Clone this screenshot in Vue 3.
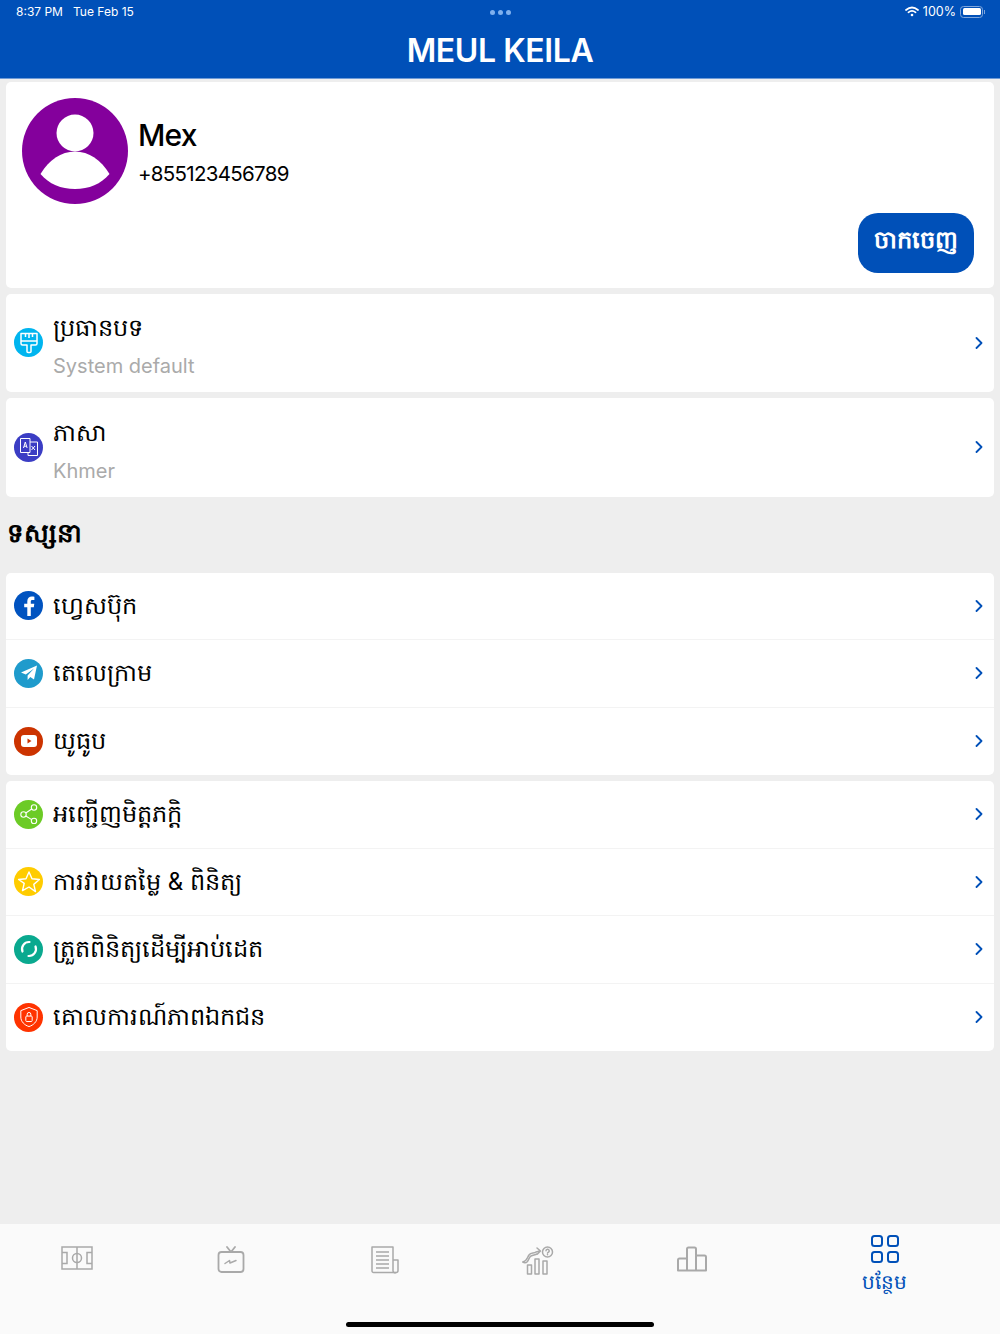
<template>
  <div class="page">
    <header class="top">
      <div class="status">
        <span class="clock">8:37 PM</span>
        <span class="date">Tue Feb 15</span>
        <span class="dots"><i></i><i></i><i></i></span>
        <span class="status-right">
          <svg width="14" height="11" viewBox="0 0 14 11" fill="none" stroke="#fff" stroke-linecap="round">
            <path d="M1 4Q7-1 13 4" stroke-width="1.7" />
            <path d="M3.4 6.3Q7 3.4 10.6 6.3" stroke-width="1.7" />
            <circle cx="7" cy="9" r="1.3" fill="#fff" stroke="none" />
          </svg>
          <span class="pct">100%</span>
          <span class="battery"><b></b></span>
        </span>
      </div>
      <h1>MEUL KEILA</h1>
    </header>

    <main class="content">
      <section class="card profile">
        <div class="who">
          <svg class="avatar" width="106" height="106" viewBox="0 0 106 106">
            <circle cx="53" cy="53" r="53" fill="#84009c" />
            <circle cx="53" cy="35" r="18.5" fill="#fff" />
            <path d="M18.5 76C27 62 39 53.5 53 53.5S79 62 87.5 76C79 86 67 91 53 91S27 86 18.5 76Z" fill="#fff" />
          </svg>
          <div class="names">
            <div class="name">Mex</div>
            <div class="phone">+855123456789</div>
          </div>
        </div>
        <button class="logout">ចាកចេញ</button>
      </section>

      <section v-for="s in settings" :key="s.title" class="card setting">
        <span class="badge" :style="{ background: s.color }" v-html="s.icon"></span>
        <div class="setting-text">
          <div class="label">{{ s.title }}</div>
          <div class="sub">{{ s.sub }}</div>
        </div>
        <svg class="chev" width="8" height="12" viewBox="0 0 8 12" fill="none"><path d="M1.5 1l5 5-5 5" stroke="#0050b8" stroke-width="1.8" stroke-linecap="round" stroke-linejoin="round" /></svg>
      </section>

      <h2>ទស្សនា</h2>

      <section v-for="(group, i) in groups" :key="i" class="card group">
        <div v-for="row in group" :key="row.title" class="row">
          <span class="badge" :style="{ background: row.color }" v-html="row.icon"></span>
          <span class="label">{{ row.title }}</span>
          <svg class="chev" width="8" height="12" viewBox="0 0 8 12" fill="none"><path d="M1.5 1l5 5-5 5" stroke="#0050b8" stroke-width="1.8" stroke-linecap="round" stroke-linejoin="round" /></svg>
        </div>
      </section>
    </main>

    <nav class="tabs">
      <div class="tab">
        <svg width="32" height="24" viewBox="0 0 32 24" fill="none" stroke="#a9a9a9" stroke-width="1.5">
          <rect x="1" y="1" width="30" height="22" />
          <path d="M16 1v22M1 6.5h5v11H1M31 6.5h-5v11h5" />
          <circle cx="16" cy="12" r="4.5" />
        </svg>
      </div>
      <div class="tab">
        <svg width="28" height="28" viewBox="0 0 28 28" fill="none" stroke="#a9a9a9" stroke-width="1.8" stroke-linejoin="round" stroke-linecap="round">
          <rect x="1.5" y="6" width="25" height="20" rx="3" />
          <path d="M10 1l4 5 4-5" />
          <path d="M8 17.5l4.5-3 .5 2.5 6-2.500" stroke-width="1.5" />
        </svg>
      </div>
      <div class="tab">
        <svg width="29" height="28" viewBox="0 0 29 28" fill="none" stroke="#a9a9a9" stroke-width="1.5" stroke-linejoin="round">
          <path d="M23 19V1H2v24a1.5 1.5 0 0 0 1.5 1.5H26a2 2 0 0 0 2-2V14h-5" />
          <path d="M6 6h13M6 10h13M6 14h13M6 18h13M6 22h13" />
          <path d="M23 19v5.5a2 2 0 0 0 3 2" />
        </svg>
      </div>
      <div class="tab">
        <svg width="32" height="30" viewBox="0 0 32 30" fill="none" stroke="#a9a9a9" stroke-width="1.5" stroke-linejoin="round" stroke-linecap="round">
          <path d="M1 16c4-1 4-4 6-7s5-1 7-3l4-1M15 2l3.5 3-3 3" />
          <path d="M1 16c1 1 3 1 4 0 2-2 2-5 4-6s4-1 6-2" />
          <circle cx="25.5" cy="6" r="5" />
          <path d="M24 4.8a1.6 1.6 0 1 1 2.3 1.5l-.8.7M25.5 8.5v.2" />
          <rect x="5.500" y="19" width="4" height="9" />
          <rect x="13" y="13" width="4" height="15" />
          <rect x="21" y="15" width="4" height="13" />
        </svg>
      </div>
      <div class="tab">
        <svg width="30" height="26" viewBox="0 0 30 26" fill="none" stroke="#a9a9a9" stroke-width="2" stroke-linejoin="round">
          <path d="M1 24.5V14a1.5 1.5 0 0 1 1.5-1.5H10V3a1.5 1.5 0 0 1 1.5-1.5h6A1.5 1.5 0 0 1 19 3v6.5h8.5A1.5 1.5 0 0 1 29 11v13.5Z" />
          <path d="M10 12.5v12M19 9.5v15" />
        </svg>
      </div>
      <div class="tab active">
        <svg width="30" height="30" viewBox="0 0 30 30" fill="none" stroke="#0050b8" stroke-width="2">
          <rect x="2" y="2" width="10" height="10" rx="2.5" />
          <rect x="18" y="2" width="10" height="10" rx="2.5" />
          <rect x="2" y="18" width="10" height="10" rx="2.5" />
          <rect x="18" y="18" width="10" height="10" rx="2.5" />
        </svg>
        <span class="tab-label">បន្ថែម</span>
      </div>
      <span class="home-bar"></span>
    </nav>
  </div>
</template>

<script setup>
const brush = `<svg width="20" height="22" viewBox="0 0 20 22" fill="none" stroke="#fff" stroke-width="1.5" stroke-linejoin="round"><path d="M2 1.5h16v10a1.5 1.5 0 0 1-1.5 1.5H12v6.500a1 1 0 0 1-1 1H9a1 1 0 0 1-1-1V13H3.5A1.5 1.5 0 0 1 2 11.5Z"/><path d="M2 9h16M6.5 1.5V5M10 1.5V6M13.500 1.5V5"/></svg>`
const translate = `<svg width="20" height="20" viewBox="0 0 20 20" fill="none" stroke="#fff" stroke-width="1"><path d="M1.5 1.5H11v14H1.5z"/><path d="M11 5h7.5v13.5H9v-3"/><path d="M4.5 11l1.800-6 1.800 6M5 9.200h2.600" /><path d="M12.500 9l3.500 4M16 9l-3.500 4"/></svg>`
const fb = `<svg width="12" height="20" viewBox="0 0 12 20"><path d="M7.800 20v-8.800h3l.5-3.500H7.800V5.600c0-1 .3-1.700 1.700-1.700h1.900V.8C11 .7 10 .6 8.900.6 6.200.6 4.300 2.300 4.300 5.300v2.400H1.200v3.500h3.100V20Z" fill="#fff"/></svg>`
const plane = `<svg width="18" height="18" viewBox="0 0 18 18"><path d="M17 1.500 1 8.500l4.800 1.900L14 4.500 7.600 11.500v4.500l2.700-3 3.700 2.500Z" fill="#fff"/></svg>`
const yt = `<svg width="16" height="12" viewBox="0 0 16 12"><rect width="16" height="12" rx="3" fill="#fff"/><path d="M6.500 3.500 10.500 6l-4 2.500Z" fill="#cc3300"/></svg>`
const share = `<svg width="20" height="20" viewBox="0 0 20 20" fill="none" stroke="#fff" stroke-width="1.100"><circle cx="15" cy="3.500" r="2.700"/><circle cx="4.500" cy="10.500" r="2.700"/><circle cx="15" cy="17" r="2.700"/><path d="M6.800 9l5.900-4M6.800 12l5.900 3.600"/></svg>`
const star = `<svg width="24" height="24" viewBox="0 0 24 24" fill="none" stroke="#fff" stroke-width="1.400" stroke-linejoin="round"><path d="M12 2l3 6.800 7.400.7-5.600 4.900 1.700 7.200L12 17l-6.500 3.600 1.700-7.200L1.600 9.500 9 8.800Z"/></svg>`
const sync = `<svg width="20" height="20" viewBox="0 0 20 20" fill="none" stroke="#fff" stroke-width="2.200" stroke-linecap="round"><path d="M3.500 12.500A7 7 0 0 1 10.500 3"/><path d="M16.500 7.500A7 7 0 0 1 9.500 17"/></svg>`
const shield = `<svg width="20" height="22" viewBox="0 0 22 24" fill="none" stroke="#fff" stroke-width="1.100"><path d="M11 1.500 20 5v7c0 5-4 9-9 10.500C6 21 2 17 2 12V5Z"/><rect x="7.500" y="11" width="7" height="6" rx="1"/><path d="M9 11V9a2 2 0 0 1 4 0v2"/></svg>`

const settings = [
  { title: 'ប្រធានបទ', sub: 'System default', color: '#00b5ef', icon: brush },
  { title: 'ភាសា', sub: 'Khmer', color: '#3b3dc4', icon: translate },
]

const groups = [
  [
    { title: 'ហ្វេសប៊ុក', color: '#0053c0', icon: fb },
    { title: 'តេលេក្រាម', color: '#1f9bcc', icon: plane },
    { title: 'យូធូប', color: '#cc3300', icon: yt },
  ],
  [
    { title: 'អញ្ជើញមិត្តភក្តិ', color: '#6ccb26', icon: share },
    { title: 'ការវាយតម្លៃ & ពិនិត្យ', color: '#ffcc00', icon: star },
    { title: 'ត្រួតពិនិត្យដើម្បីអាប់ដេត', color: '#0aa98f', icon: sync },
    { title: 'គោលការណ៍ភាពឯកជន', color: '#ff3300', icon: shield },
  ],
]
</script>

<style>
body {
  background: #eeeeee;
}
</style>

<style scoped>
.page {
  width: 1000px;
  height: 1334px;
  display: flex;
  flex-direction: column;
  background: #eeeeee;
  font-family: Inter, "Noto Sans", sans-serif;
  color: #000;
  overflow: hidden;
}

.top {
  height: 78px;
  flex: none;
  background: #0050b8;
  border-bottom: 1px solid #6f9bd6;
  box-sizing: content-box;
  color: #fff;
}

.status {
  height: 23px;
  display: flex;
  align-items: center;
  position: relative;
  padding: 0 17px 0 16px;
  font-size: 12px;
}

.date {
  margin-left: 10px;
}

.dots {
  position: absolute;
  left: 490px;
  top: 10px;
  display: flex;
  gap: 3px;
}

.dots i {
  width: 5px;
  height: 5px;
  border-radius: 50%;
  background: #7fb0ee;
}

.status-right {
  margin-left: auto;
  display: flex;
  align-items: center;
  gap: 4px;
}

.pct {
  font-size: 12.5px;
}

.battery {
  position: relative;
  flex: none;
  width: 23px;
  height: 12px;
  padding: 1.5px;
  border: 1px solid #7fa6dc;
  border-radius: 3.5px;
  box-sizing: border-box;
  display: block;
}

.battery::after {
  content: "";
  position: absolute;
  right: -3px;
  top: 3px;
  width: 1.5px;
  height: 4px;
  background: #7fa6dc;
}

.battery b {
  display: block;
  width: 100%;
  height: 100%;
  background: #fff;
  border-radius: 1.5px;
}

h1 {
  margin: 0;
  height: 55px;
  line-height: 56px;
  text-align: center;
  font-size: 32px;
  font-weight: 600;
  letter-spacing: -0.4px;
}

.content {
  flex: 1;
  padding: 3px 6px 0;
  display: flex;
  flex-direction: column;
  gap: 6px;
}

.card {
  background: #fff;
  border-radius: 5px;
}

.profile {
  height: 205.5px;
  padding: 16px 20px 15px 16px;
  box-sizing: border-box;
  display: flex;
  flex-direction: column;
  justify-content: space-between;
}

.who {
  display: flex;
  align-items: center;
  gap: 10px;
}

.avatar {
  flex: none;
}

.names {
  padding-top: 4px;
}

.name {
  font-size: 30px;
  font-weight: 500;
  line-height: 42px;
  letter-spacing: -0.8px;
}

.phone {
  font-size: 20.5px;
  line-height: 36px;
  letter-spacing: -0.7px;
}

.logout {
  align-self: flex-end;
  width: 116px;
  height: 60px;
  border: 0;
  border-radius: 20px;
  background: #0050b8;
  color: #fff;
  font: inherit;
  font-size: 24px;
  font-weight: 700;
}

.setting {
  height: 98.5px;
  padding: 0 11px 0 8px;
  display: flex;
  align-items: center;
  box-sizing: border-box;
}

.setting-text {
  flex: 1;
  padding-top: 9px;
}

.badge {
  flex: none;
  width: 29px;
  height: 29px;
  margin-right: 10px;
  border-radius: 50%;
  display: flex;
  align-items: center;
  justify-content: center;
}

.label {
  font-size: 24px;
  line-height: 38px;
}

.sub {
  font-size: 20px;
  line-height: 38px;
  color: #aaaaaa;
}

h2 {
  margin: 6px 1px 11px;
  height: 47px;
  line-height: 47px;
  font-size: 26px;
  font-weight: 700;
}

.group {
  display: flex;
  flex-direction: column;
}

.row {
  height: 67.5px;
  padding: 0 11px 0 8px;
  display: flex;
  align-items: center;
  box-sizing: border-box;
  border-bottom: 1px solid #f3f3f3;
}

.row:last-child {
  border-bottom: 0;
}

.row .label {
  flex: 1;
}

.tabs {
  position: relative;
  height: 110px;
  flex: none;
  background: #fafafa;
  display: grid;
  grid-template-columns: 154px 154px 153px 154px 154px 231px;
}

.tab {
  display: flex;
  flex-direction: column;
  align-items: center;
  padding-top: 22px;
}

.tab.active {
  padding-top: 10px;
}

.tab-label {
  font-size: 20px;
  line-height: 36px;
  color: #0050b8;
}

.home-bar {
  position: absolute;
  left: 346px;
  top: 98px;
  width: 308px;
  height: 5px;
  border-radius: 3px;
  background: #000;
}
</style>
